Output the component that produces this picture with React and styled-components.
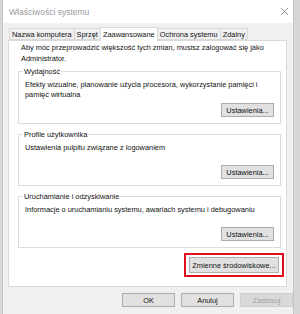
import React from 'react'
import styled, { createGlobalStyle } from 'styled-components';

const GlobalStyle = createGlobalStyle`
html, body {
    margin:0;
    padding:0;
    background:#d6d6d6;
}
body{
    width:300px;
    height:314px;
    overflow:hidden;
    font-family: "Liberation Sans", Arial, sans-serif;
}
`

const Window = styled.div`
margin-left:2px;
width:292px;
height:314px;
display:flex;
flex-direction:column;
background:#f0f0f0;
border-left:1px solid #c4c4c4;
border-right:1px solid #c4c4c4;
box-sizing:border-box;
`

const TitleBar = styled.div`
height:23px;
background:#fff;
display:flex;
align-items:center;
justify-content:space-between;
padding: 0 4px 0 6px;
flex-shrink:0;

.title{
    color:#9a9a9a;
    font-size:8.5px;
}
`

const Body = styled.div`
display:flex;
flex-direction:column;
padding: 4px 6px 0 5px;
`

const Tabs = styled.div`
display:flex;
align-items:flex-end;
height:13px;
padding-left:2px;
`

const Tab = styled.div`
height:${p => p.$active ? '13px' : '10px'};
padding: 0 2px;
display:flex;
align-items:center;
font-size:7.4px;
color:#111;
background:${p => p.$active ? '#fff' : '#f0f0f0'};
border:1px solid #d9d9d9;
border-bottom:${p => p.$active ? 'none' : '1px solid #d9d9d9'};
margin-left:-1px;
margin-bottom:${p => p.$active ? '-1px' : '0'};
position:relative;
z-index:${p => p.$active ? 1 : 0};
white-space:nowrap;
`

const Panel = styled.div`
height:247px;
flex-shrink:0;
box-sizing:border-box;
background:#fff;
border:1px solid #d9d9d9;
padding: 2px 5px 0 9px;
display:flex;
flex-direction:column;
`

const Intro = styled.p`
margin:0 0 0 3px;
font-size:7.4px;
line-height:10.5px;
color:#111;
`

const Group = styled.div`
margin-top:${p => p.$mt}px;
padding: 0 6px 6px 6px;
height:${p => p.$h}px;
flex-shrink:0;
box-sizing:border-box;
border:1px solid #dcdcdc;
display:flex;
flex-direction:column;
align-items:flex-start;

.legend{
    margin: -5px 0 0 -2px;
    font-size:7.4px;
    color:#111;
    padding:0 1px;
    line-height:9px;
    background:#fff;
}
.text{
    margin: 4px 0 0 0;
    font-size:7.4px;
    line-height:9.5px;
    color:#111;
    flex:1;
}
`

const Button = styled.button`
font-family:inherit;
font-size:7.4px;
color:${p => p.disabled ? '#a3a3a3' : '#111'};
background:${p => p.disabled ? '#d9d9d9' : '#e1e1e1'};
border:1px solid ${p => p.disabled ? '#cfcfcf' : '#adadad'};
width:${p => p.$w || 53}px;
height:${p => p.$h || 14}px;
flex-shrink:0;
padding:0;
border-radius:0;
`

const Right = styled.div`
display:flex;
justify-content:flex-end;
align-self:stretch;
margin-top:${p => p.$mt || 0}px;
`

const Highlight = styled.div`
border:2px solid #e0101e;
padding:2px 3px;
display:flex;
margin-right:-3px;
`

const Footer = styled.div`
display:flex;
justify-content:flex-end;
gap:6px;
padding: 6px 0 0 0;
margin-right:-6px;
`

function App() {
  return (
    <>
      <GlobalStyle/>
      <Window>
        <TitleBar>
            <span className='title'>Właściwości systemu</span>
            <svg width="9" height="9" viewBox="0 0 9 9">
                <path d="M1 1 L8 8 M8 1 L1 8" stroke="#8a8a8a" strokeWidth="0.9" />
            </svg>
        </TitleBar>
        <Body>
            <Tabs>
                <Tab>Nazwa komputera</Tab>
                <Tab>Sprzęt</Tab>
                <Tab $active>Zaawansowane</Tab>
                <Tab>Ochrona systemu</Tab>
                <Tab>Zdalny</Tab>
            </Tabs>
            <Panel>
                <Intro>Aby móc przeprowadzić większość tych zmian, musisz zalogować się jako Administrator.</Intro>
                <Group $h={53} $mt={7}>
                    <span className='legend'>Wydajność</span>
                    <p className='text'>Efekty wizualne, planowanie użycia procesora, wykorzystanie pamięci i pamięć wirtualna</p>
                    <Right><Button>Ustawienia...</Button></Right>
                </Group>
                <Group $h={52} $mt={10}>
                    <span className='legend'>Profile użytkownika</span>
                    <p className='text'>Ustawienia pulpitu związane z logowaniem</p>
                    <Right><Button>Ustawienia...</Button></Right>
                </Group>
                <Group $h={52} $mt={10}>
                    <span className='legend'>Uruchamianie i odzyskiwanie</span>
                    <p className='text'>Informacje o uruchamianiu systemu, awariach systemu i debugowaniu</p>
                    <Right><Button>Ustawienia...</Button></Right>
                </Group>
                <Right $mt={5}>
                    <Highlight><Button $w={90} $h={16}>Zmienne środowiskowe...</Button></Highlight>
                </Right>
            </Panel>
            <Footer>
                <Button>OK</Button>
                <Button>Anuluj</Button>
                <Button disabled>Zastosuj</Button>
            </Footer>
        </Body>
      </Window>
    </>
  )
}

export default App
